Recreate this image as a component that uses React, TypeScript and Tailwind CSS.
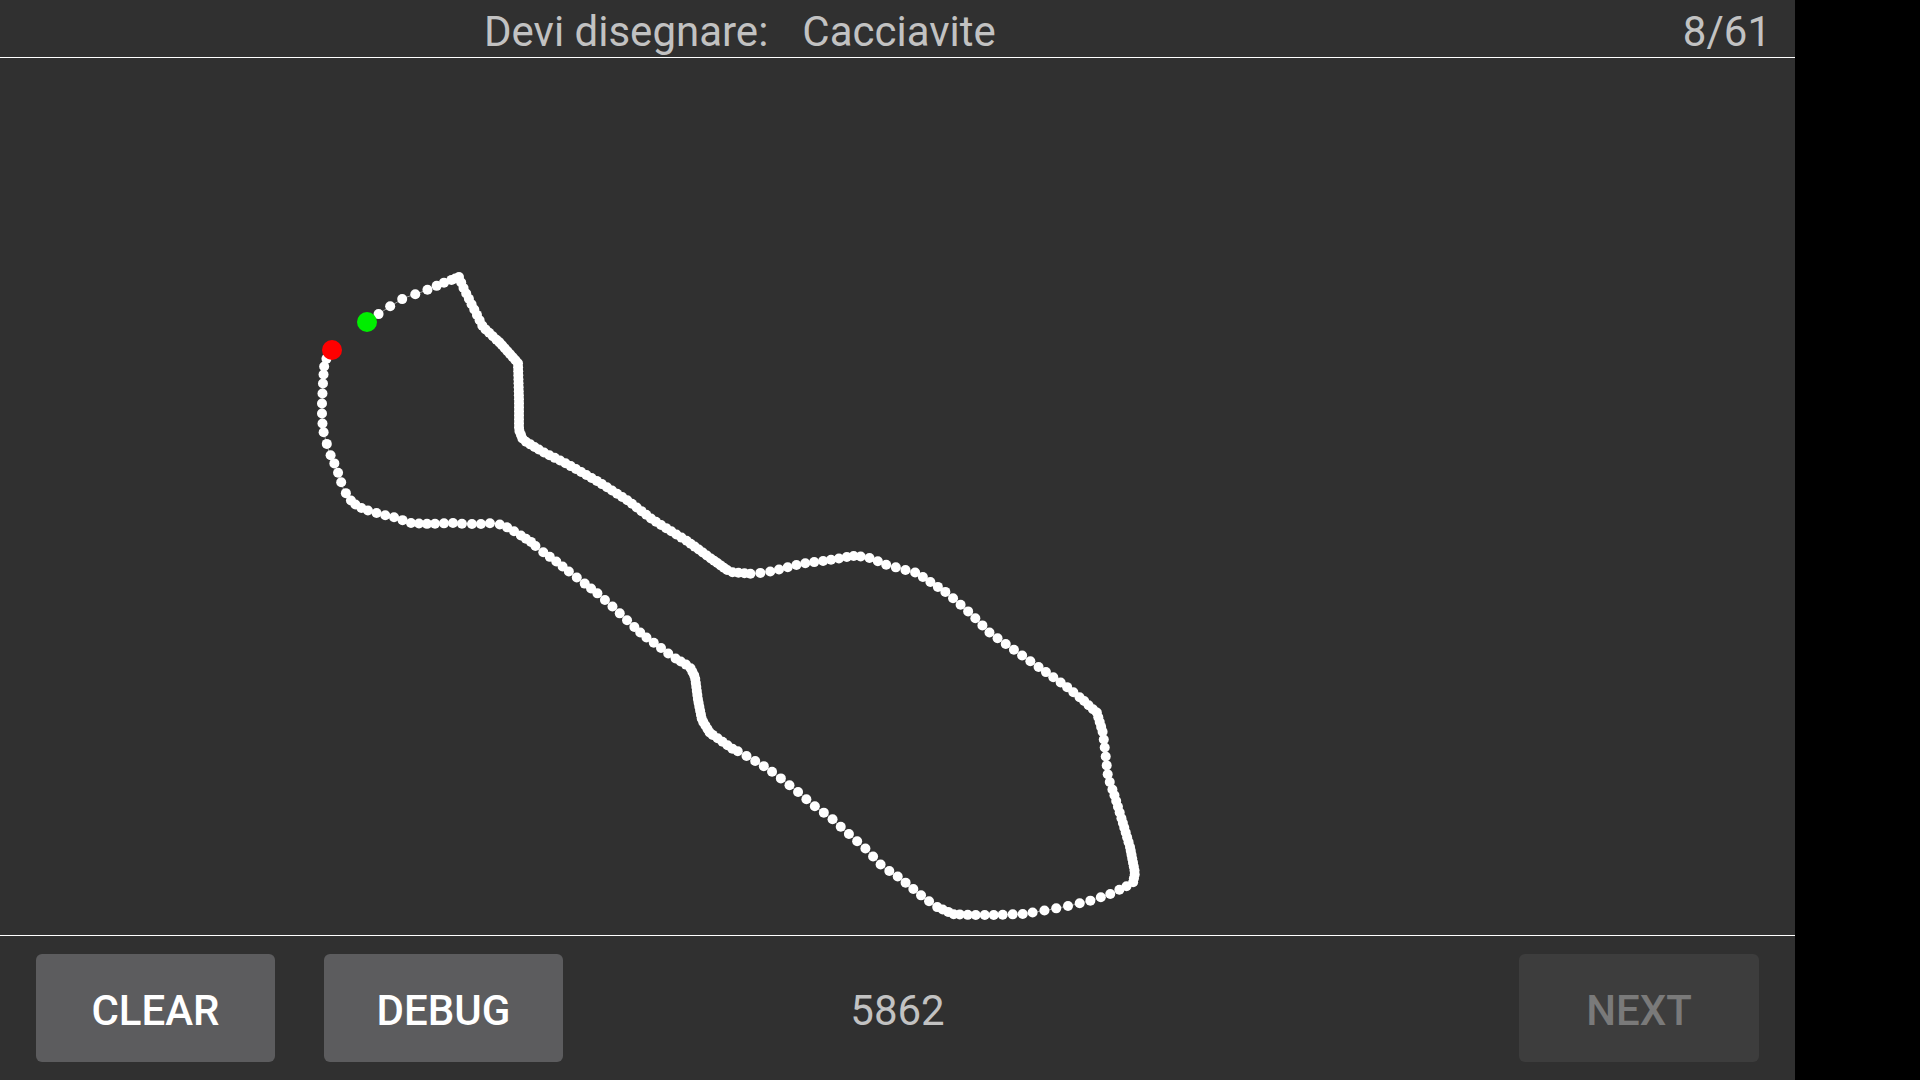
import type { FC } from "react";

// stroke points in page coordinates: [x, y, dot spacing for the segment ending here]
const stroke: [number, number, number][] = [
  [367, 322, 0], [389, 307, 14], [404, 298, 14], [419, 293, 14], [432, 288, 13], [443, 283, 10],
  [454, 279, 8], [459, 277, 4], [463, 287, 6], [473, 307, 6], [483, 327, 6], [500, 343, 5],
  [518, 363, 4], [519, 400, 4], [519, 430, 4], [523, 440, 4], [543, 452, 5], [567, 464, 6],
  [597, 481, 6], [627, 500, 6], [653, 520, 6], [687, 541, 6], [713, 560, 5], [730, 572, 4],
  [753, 574, 6], [773, 571, 10], [800, 564, 9], [830, 560, 9], [853, 556, 8], [867, 557, 7],
  [887, 565, 9], [917, 573, 10], [947, 593, 9], [970, 613, 10], [990, 633, 10], [1017, 652, 10],
  [1043, 670, 10], [1067, 687, 9], [1083, 700, 8], [1097, 713, 6], [1103, 733, 5], [1105, 750, 8],
  [1108, 777, 9], [1115, 797, 8], [1122, 820, 6], [1130, 847, 5], [1135, 873, 4], [1133, 883, 4],
  [1113, 893, 8], [1093, 900, 10], [1073, 905, 11], [1048, 910, 12], [1023, 914, 12], [993, 915, 10],
  [970, 915, 9], [953, 914, 8], [937, 907, 6], [923, 897, 10], [900, 878, 10], [883, 867, 10],
  [867, 850, 11], [850, 835, 11], [830, 817, 11], [813, 805, 11], [798, 792, 11], [783, 780, 11],
  [767, 768, 11], [750, 758, 10], [730, 747, 10], [710, 733, 6], [702, 720, 4], [698, 700, 4],
  [695, 677, 4], [690, 667, 4], [673, 657, 6], [657, 645, 9], [643, 635, 9], [630, 623, 8],
  [613, 607, 10], [597, 593, 10], [580, 580, 8], [567, 570, 10], [557, 562, 8], [543, 552, 8],
  [528, 540, 10], [517, 533, 6], [503, 525, 8], [492, 523, 8], [480, 524, 10], [467, 524, 9],
  [452, 523, 10], [430, 524, 9], [410, 523, 8], [397, 518, 9], [380, 514, 9], [363, 509, 9],
  [353, 503, 7], [348, 497, 6], [343, 488, 9], [339, 475, 12], [333, 460, 10], [329, 452, 9],
  [323, 430, 12], [322, 417, 9], [322, 403, 10], [323, 383, 10], [324, 367, 9], [327, 357, 8],
  [332, 350, 6],
];

const sampleDots = (pts: [number, number, number][]) => {
  const out: [number, number][] = [[pts[0][0], pts[0][1]]];
  let carry = 0;
  for (let i = 1; i < pts.length; i++) {
    const [x0, y0] = pts[i - 1];
    const [x1, y1, s] = pts[i];
    const len = Math.hypot(x1 - x0, y1 - y0);
    let d = s - carry;
    while (d <= len) {
      const t = d / len;
      out.push([x0 + (x1 - x0) * t, y0 + (y1 - y0) * t]);
      d += s;
    }
    carry = len - (d - s);
  }
  return out;
};

const Drawing: FC = () => {
  const dots = sampleDots(stroke);
  const line = stroke.map(([x, y]) => `${x},${y}`).join(" ");
  const end = stroke[stroke.length - 1];
  return (
    <svg className="block" width={1795} height={877} viewBox="0 58 1795 877">
      <polyline points={line} fill="none" stroke="#9a9a9a" strokeWidth={1} />
      {dots.map(([x, y], i) => (
        <circle key={i} cx={x} cy={y} r={5} fill="#ffffff" />
      ))}
      <circle cx={367} cy={322} r={10} fill="#00ee00" />
      <circle cx={end[0]} cy={end[1]} r={10} fill="#ff0000" />
    </svg>
  );
};

const App = () => {
  return (
    <div
      className="flex w-[1920px] h-[1080px] bg-black overflow-hidden"
      style={{ fontFamily: "Roboto, 'Liberation Sans', sans-serif" }}
    >
      <main className="flex flex-col w-[1795px] h-full bg-[#303030]">
        <header className="flex items-center h-[58px] pt-[7px] border-b border-white text-[42px] text-[#c2c2c2] leading-none">
          <span className="ml-[484px]">Devi disegnare:</span>
          <span className="ml-[34px]">Cacciavite</span>
          <span className="ml-auto mr-[24px]">8/61</span>
        </header>

        <section className="flex-1">
          <Drawing />
        </section>

        <footer className="grid grid-cols-[1fr_auto_1fr] items-center h-[145px] px-[36px] border-t border-white">
          <div className="flex gap-[49px]">
            <button className="w-[239px] h-[108px] pt-[4px] rounded-md bg-[#5c5c5e] text-white text-[42px] font-medium">
              CLEAR
            </button>
            <button className="w-[239px] h-[108px] pt-[4px] rounded-md bg-[#5c5c5e] text-white text-[42px] font-medium">
              DEBUG
            </button>
          </div>
          <span className="pt-[4px] text-[42px] text-[#c2c2c2]">5862</span>
          <div className="flex justify-end">
            <button className="w-[240px] h-[108px] pt-[4px] rounded-md bg-[#3d3d3d] text-[#7a7a7a] text-[42px] font-medium">
              NEXT
            </button>
          </div>
        </footer>
      </main>
    </div>
  );
};

export default App;
